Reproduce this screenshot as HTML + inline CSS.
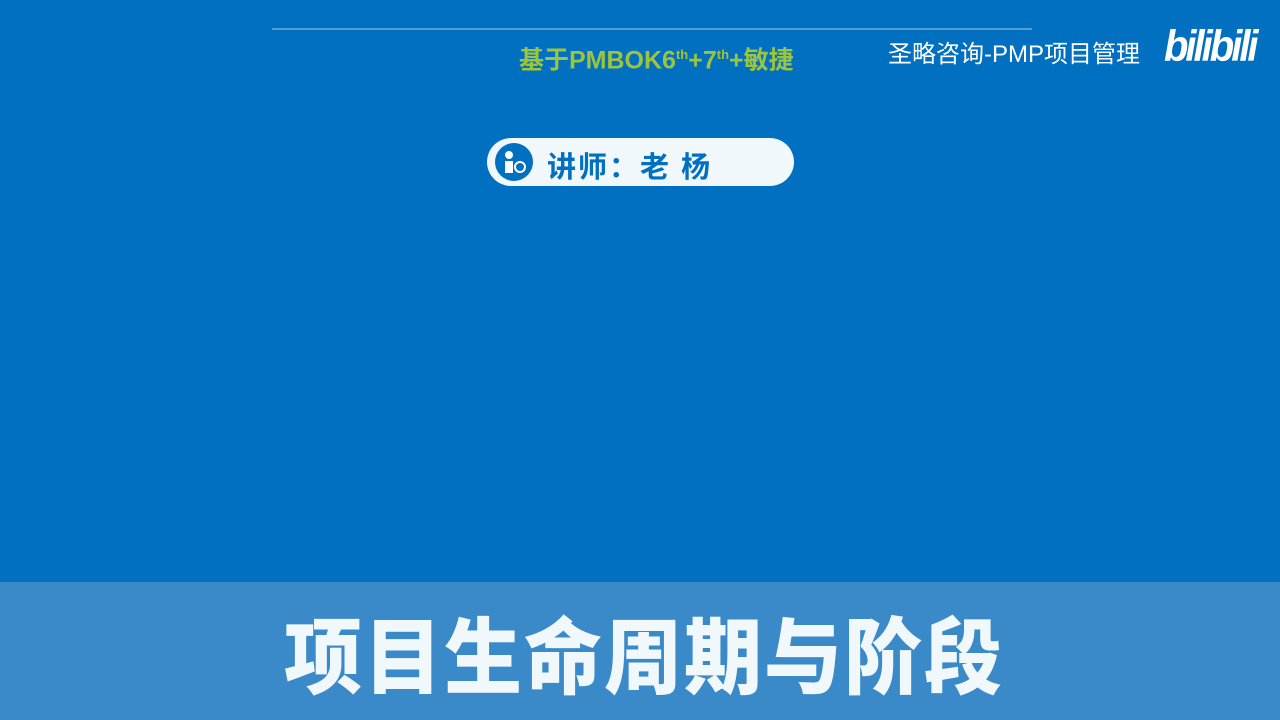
<!DOCTYPE html>
<html><head><meta charset="utf-8"><style>
html,body{margin:0;width:1280px;height:720px;overflow:hidden}
body{background:#0170c1;position:relative;font-family:"Liberation Sans","Noto Sans CJK SC",sans-serif}
.line{position:absolute;left:272px;top:28px;width:760px;height:2px;background:#5a9ad0}
.sub{position:absolute;left:519px;top:40px;color:#9cc43c;font-size:25px;font-weight:bold;white-space:nowrap;line-height:30px}
.sub sup{font-size:13px}
.brand{position:absolute;left:888px;top:34px;color:#fff;font-size:24px;white-space:nowrap}
.bili{position:absolute;left:1164px;top:24px;color:#fff;font-size:40px;font-weight:bold;font-style:italic;letter-spacing:-3px;transform:scaleY(1.1)}
.pill{position:absolute;left:487px;top:138px;width:307px;height:48px;border-radius:24px;background:#f0f8fc}
.icon{position:absolute;left:8px;top:5px;width:38px;height:38px;border-radius:50%;background:#0170c1}
.pt{position:absolute;left:60px;top:6px;color:#0170c1;font-size:29px;font-weight:bold;letter-spacing:2px}
.band{position:absolute;left:0;top:582px;width:1280px;height:138px;background:#3a89c8}
.title{position:absolute;left:284px;top:617px;color:#f0f8fc;font-size:78px;line-height:1;font-weight:900;letter-spacing:2px;white-space:nowrap;transform:scaleY(1.06);transform-origin:top}
</style></head><body>
<div class="line"></div>
<div class="sub">基于PMBOK6<sup>th</sup>+7<sup>th</sup>+敏捷</div>
<div class="brand">圣略咨询-PMP项目管理</div>
<div class="bili">bilibili</div>
<div class="pill"><div class="icon"><svg width="38" height="38"><circle cx="14" cy="12" r="4" fill="#fff"/><rect x="10" y="18" width="8" height="12" fill="#fff"/><circle cx="25" cy="24" r="5" fill="none" stroke="#fff" stroke-width="2"/></svg></div><div class="pt">讲师：老 杨</div></div>
<div class="band"></div>
<div class="title">项目生命周期与阶段</div>
</body></html>
